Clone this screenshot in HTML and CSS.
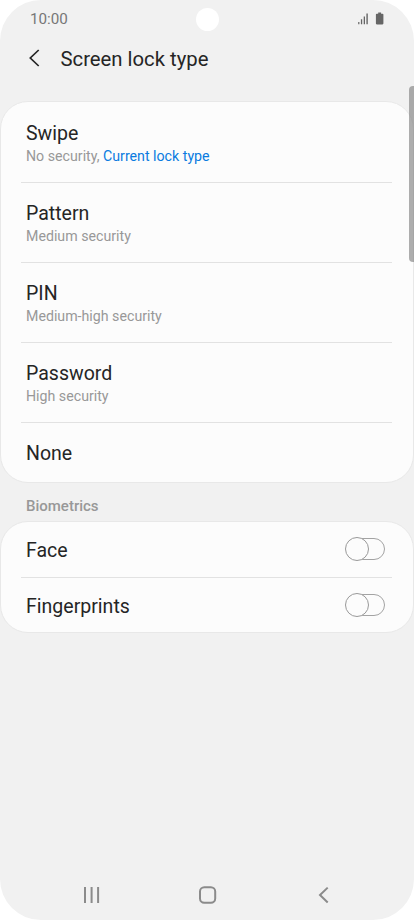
FILE: index.html
```html
<!DOCTYPE html>
<html lang="en">
<head>
<meta charset="utf-8">
<title>Screen lock type</title>
<link rel="stylesheet" href="styles.css">
</head>
<body>
<div class="phone">
  <div class="status">
    <span class="time">10:00</span>
    <span class="camera"></span>
    <svg class="indicators" width="28" height="14" viewBox="0 0 28 14" fill="#666">
      <path d="M1.2 10h1.2v2.2H1.2zM3.9 7.3h1.3v4.9H3.9zM6.7 4.6H8v7.6H6.7zM9.4 1.4h1.4v10.8H9.4z"/>
      <path d="M21.2.5h2.9v1.2h1.4q.9 0 .9.9v9q0 .8-.9.8h-5.7q-.9 0-.9-.8v-9q0-.9.9-.9h1.4z"/>
    </svg>
  </div>
  <header class="header">
    <svg class="back" width="12" height="18" viewBox="0 0 12 18" fill="none" stroke="#252525" stroke-width="1.7"><path d="M10.7 1L2.3 9l8.4 8"/></svg>
    <h1 class="heading">Screen lock type</h1>
  </header>
  <main>
    <section class="card locks">
      <div class="row"><div class="title">Swipe</div><div class="sub">No security, <span class="current">Current lock type</span></div></div>
      <div class="row"><div class="title">Pattern</div><div class="sub">Medium security</div></div>
      <div class="row"><div class="title">PIN</div><div class="sub">Medium-high security</div></div>
      <div class="row"><div class="title">Password</div><div class="sub">High security</div></div>
      <div class="row last"><div class="title">None</div></div>
    </section>
    <h2 class="label">Biometrics</h2>
    <section class="card">
      <div class="option"><div class="title">Face</div><span class="switch"><span class="knob"></span></span></div>
      <div class="option"><div class="title">Fingerprints</div><span class="switch"><span class="knob"></span></span></div>
    </section>
  </main>
  <div class="scrollbar"></div>
  <nav class="nav">
    <svg width="18" height="18" viewBox="0 0 18 18" fill="none" stroke="#8b8b8b" stroke-width="2"><path d="M2 1v16M8.6 1v16M15.1 1v16"/></svg>
    <svg width="18" height="18" viewBox="0 0 18 18" fill="none" stroke="#8b8b8b" stroke-width="2"><rect x="1" y="1.2" width="15.2" height="15.6" rx="4.3"/></svg>
    <svg width="18" height="18" viewBox="0 0 18 18" fill="none" stroke="#8b8b8b" stroke-width="2"><path d="M12.7 1.6L5 9l7.7 7.5"/></svg>
  </nav>
</div>
</body>
</html>
```
FILE: styles.css
```css
* { box-sizing: border-box; }
body { margin: 0; background: #fff; font-family: Roboto, "Liberation Sans", sans-serif; }
.phone {
  position: relative;
  display: flex;
  flex-direction: column;
  width: 414px;
  height: 920px;
  overflow: hidden;
  border-radius: 41px;
  background: #f1f1f1;
}
.status {
  display: grid;
  grid-template-columns: 1fr 23px 1fr;
  align-items: center;
  height: 38px;
  padding: 0 29px 0 30px;
}
.time { font-size: 15.2px; color: #777; }
.camera { width: 23px; height: 23px; border-radius: 50%; background: #fff; }
.indicators { justify-self: end; }
.header { display: flex; align-items: center; gap: 20.5px; height: 42px; padding-left: 28px; margin-bottom: 21px; }
.back { display: block; margin-bottom: 2px; }
.heading { margin: 0; font-size: 20.3px; line-height: 24px; font-weight: 400; color: #252525; }
.card { border: 1px solid #e8e8e8; border-radius: 28px; background: #fcfcfc; padding: 0 21px 0 20px; }
.row { height: 80px; padding: 19px 5px 0; border-bottom: 1px solid #e2e2e2; }
.row:first-child { height: 81px; padding-top: 20px; }
.row.last { height: 59px; border-bottom: 0; }
.title { font-size: 19.55px; line-height: 24px; color: #252525; }
.sub { font-size: 14.2px; line-height: 20px; color: #989898; }
.current { color: #0a7be0; }
.label { margin: 0; padding: 13px 26px 0; height: 38px; font-size: 15px; line-height: 20px; font-weight: 500; color: #989898; }
.option { display: flex; align-items: center; justify-content: space-between; height: 54px; padding: 1px 7.5px 0 5px; }
.option:first-child { height: 56px; border-bottom: 1px solid #e2e2e2; }
.option .title { margin-top: 2px; }
.switch { display: flex; align-items: center; width: 39px; height: 22px; margin-bottom: 2px; border: 1px solid #a3a3a3; border-radius: 11px; }
.option:first-child .switch { margin-bottom: 3px; }
.knob { flex: none; width: 24px; height: 24px; margin-left: -2px; border: 1px solid #999; border-radius: 50%; background: #fcfcfc; }
.scrollbar { position: absolute; top: 86px; right: 0; width: 5px; height: 176px; border-radius: 4px 0 0 4px; background: rgba(125, 125, 125, .62); }
.nav { display: flex; justify-content: space-between; margin-top: auto; padding: 0 81px 16px 83px; }
.nav svg { display: block; }
```
